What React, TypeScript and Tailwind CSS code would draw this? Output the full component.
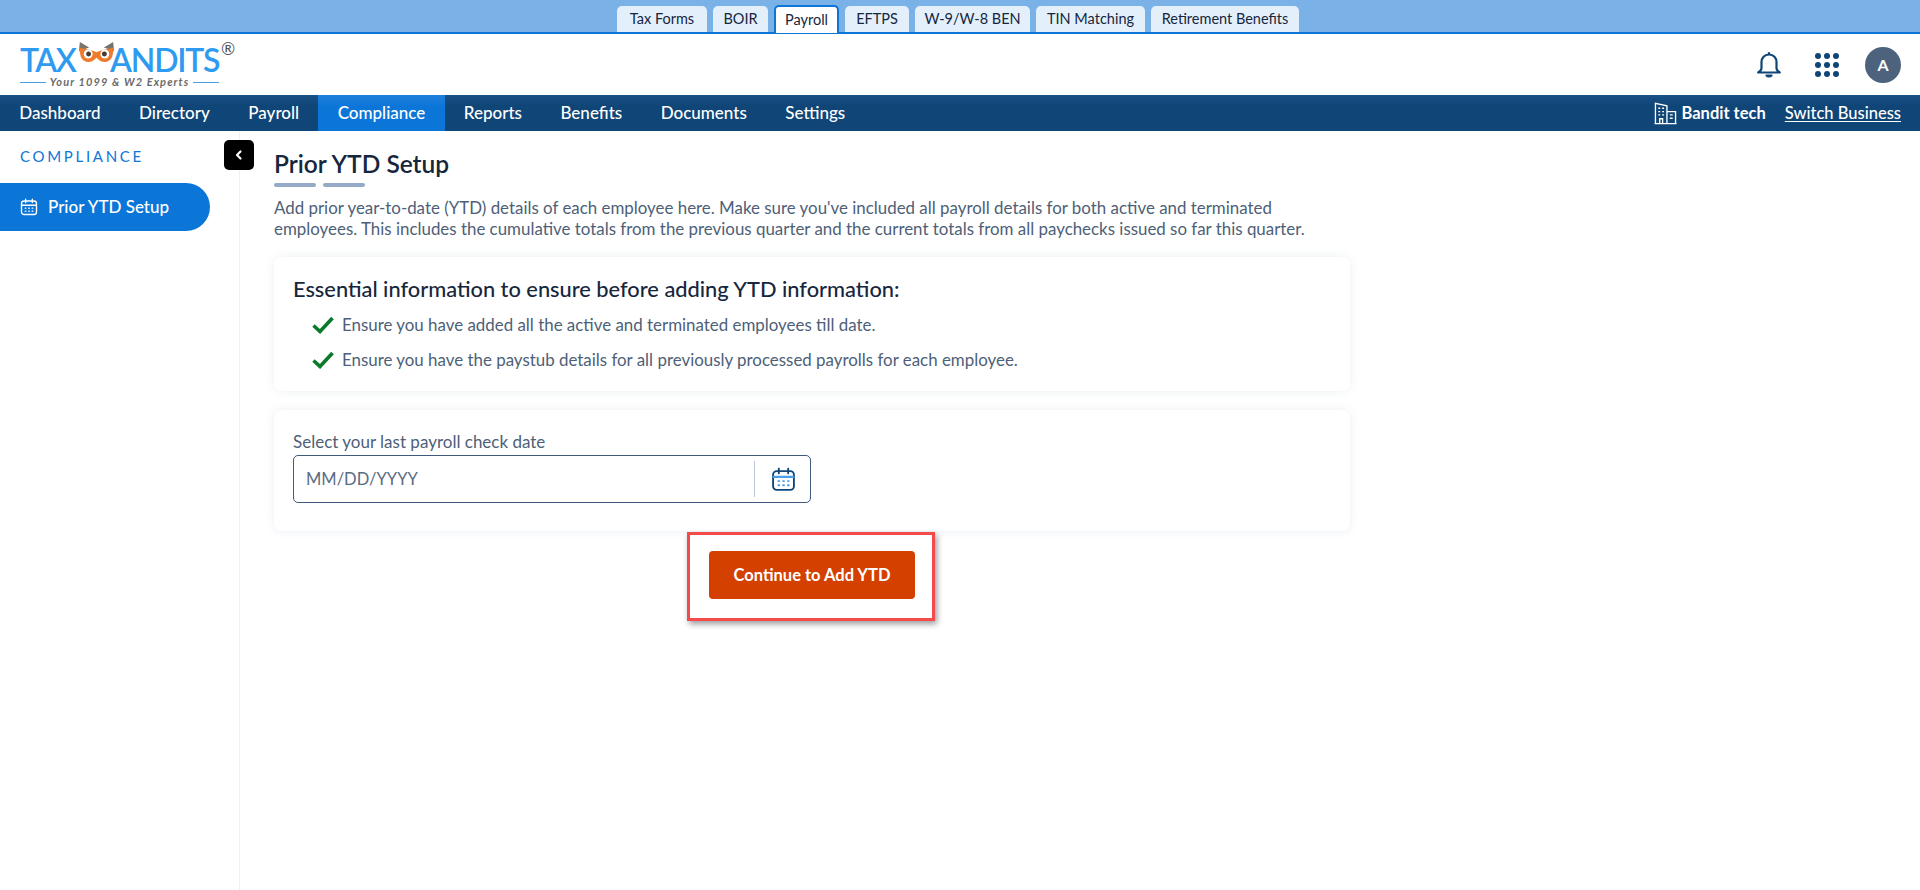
import React from "react";

const font = { fontFamily: '"Lato", "Noto Sans", sans-serif' };

const tabs = [
  { label: "Tax Forms", w: "w-[90px]" },
  { label: "BOIR", w: "w-[55px]" },
  { label: "Payroll", w: "w-[65px]", active: true },
  { label: "EFTPS", w: "w-[64px]" },
  { label: "W-9/W-8 BEN", w: "w-[115px]" },
  { label: "TIN Matching", w: "w-[109px]" },
  { label: "Retirement Benefits", w: "w-[148px]" },
];

const nav = ["Dashboard", "Directory", "Payroll", "Compliance", "Reports", "Benefits", "Documents", "Settings"];

function Calendar({ className, accent }: { className: string; accent: string }) {
  return (
    <svg viewBox="0 0 24 24" className={className} fill="none" stroke="currentColor" strokeWidth="1.8" strokeLinecap="round">
      <rect x="2" y="4" width="20" height="18" rx="3.5" />
      <path d="M7.5 1.5v4.5M16.5 1.5v4.5" />
      <path d="M2.5 9.5h19" stroke={accent} strokeWidth="2" />
      <path d="M7 13.5h.9M11.6 13.5h.9M16.2 13.5h.9M7 17.5h.9M11.6 17.5h.9M16.2 17.5h.9" stroke={accent} />
    </svg>
  );
}

function Logo() {
  return (
    <div className="w-[215px] ml-[20px] mt-[11px] relative shrink-0">
      <div className="flex items-start h-[30px] text-[32px] leading-[30px] font-semibold text-[#2f9bf0]">
        <span className="tracking-[-1.5px] w-[58px]">TAX</span>
        <svg viewBox="0 0 40 28" className="w-[37px] h-[26px] -mt-[4px] shrink-0">
          <path d="M1 11 L2 1 L12 7 Z M39 11 L38 1 L28 7 Z" fill="#77736f" />
          <path d="M1 7 C8 9 13 9 20 12 C27 9 32 9 39 7 L37 17 C33 25 25 24 20 18 C15 24 7 25 3 17 Z" fill="#ee7a2c" />
          <circle cx="11" cy="14" r="4.8" fill="#fff" />
          <circle cx="29" cy="14" r="4.8" fill="#fff" />
          <circle cx="11.5" cy="14" r="2.7" fill="#4a3b32" />
          <circle cx="28.5" cy="14" r="2.7" fill="#4a3b32" />
        </svg>
        <span className="tracking-[-1.2px] -ml-[5px]">ANDITS</span>
      </div>
      <span className="absolute left-[201px] top-[-5px] text-[17px] text-[#555] leading-none">®</span>
      <div className="flex items-center gap-[4px] mt-[1px] w-[199px]">
        <div className="h-px w-[26px] bg-[#4a9fe0]" />
        <span className="text-[11px] italic font-bold text-[#6b6b6b] leading-[12px] tracking-[1.1px] whitespace-nowrap">Your 1099 &amp; W2 Experts</span>
        <div className="h-px w-[26px] bg-[#4a9fe0]" />
      </div>
    </div>
  );
}

function Check({ text }: { text: string }) {
  return (
    <div className="flex items-center h-[35px] pl-[19px]">
      <svg viewBox="0 0 22 18" className="w-[22px] h-[18px] shrink-0 text-[#0a7a2a]" fill="none" stroke="currentColor" strokeWidth="3.6">
        <path d="M1.5 9.5 L8 15.5 L20.5 2" />
      </svg>
      <span className="ml-[8px] text-[16.9px] text-[#4e5f78]">{text}</span>
    </div>
  );
}

export default function App() {
  return (
    <div className="h-[890px] bg-white overflow-hidden flex flex-col relative" style={font}>
      <div className="h-[34px] bg-[#7ab1e6] border-b-2 border-[#0c76d8] flex justify-center items-end shrink-0">
        <div className="flex gap-[6px] h-[26px] translate-x-[-2px]">
          {tabs.map((t) =>
            t.active ? (
              <div key={t.label} className={`${t.w} h-[28px] bg-white border-2 border-b-0 border-[#0c76d8] rounded-t-[5px] -mt-[1px] flex items-center justify-center text-[14.5px] text-[#16263d]`}>
                {t.label}
              </div>
            ) : (
              <div key={t.label} className={`${t.w} bg-[#e3f0fc] rounded-t-[5px] flex items-center justify-center text-[14.5px] text-[#16263d]`}>
                {t.label}
              </div>
            )
          )}
        </div>
      </div>

      <div className="h-[61px] flex items-start justify-between shrink-0">
        <Logo />
        <div className="flex items-center mr-[19px] mt-[13px]">
          <svg viewBox="0 0 24 28" className="w-[24px] h-[28px] text-[#0f4577]" fill="none" stroke="currentColor" strokeWidth="2.2" strokeLinejoin="round">
            <path d="M12 3.5c-4.6 0-7.5 3.4-7.5 7.6v6.2c0 1.6-1.4 3-3.3 4.2h21.6c-1.9-1.2-3.3-2.6-3.3-4.2v-6.2c0-4.2-2.9-7.6-7.5-7.6z" />
            <path d="M12 1.2v2.3" />
            <path d="M9.5 24.5c.8 1.3 4.2 1.3 5 0z" fill="currentColor" />
          </svg>
          <div className="grid grid-cols-3 gap-[3px] ml-[34px]">
            {Array.from({ length: 9 }).map((_, i) => (
              <div key={i} className="w-[6px] h-[6px] rounded-full bg-[#0f4577]" />
            ))}
          </div>
          <div className="ml-[26px] w-[36px] h-[36px] rounded-full bg-[#4c627d] flex items-center justify-center text-white text-[16px] font-bold">A</div>
        </div>
      </div>

      <div className="h-[36px] bg-gradient-to-b from-[#1a5286] to-[#0f4577] from-0% to-30% flex items-center justify-between shrink-0">
        <div className="flex h-full">
          {nav.map((n) => (
            <div key={n} className={`px-[19.25px] flex items-center text-[17px] font-medium text-white ${n === "Compliance" ? "bg-gradient-to-b from-[#1f80dc] to-[#0c76d8] from-0% to-30%" : ""}`}>
              {n}
            </div>
          ))}
        </div>
        <div className="flex items-center pr-[19px] text-white">
          <svg viewBox="0 0 24 24" className="w-[23px] h-[23px]" fill="none" stroke="currentColor" strokeWidth="1.4">
            <path d="M1.5 22.5V1.5l12 2.5v18.5zM13.5 10h9v12.5h-9zM0.5 22.5h23" />
            <path d="M4.5 6.5h2M8.5 6.5h2M4.5 10h2M8.5 10h2M4.5 13.5h2M8.5 13.5h2M16.5 13.5h3M16.5 17h3M6 22v-4.5h3V22" />
          </svg>
          <span className="ml-[5px] text-[16.5px] font-bold">Bandit tech</span>
          <span className="ml-[19px] text-[16.5px] font-medium underline underline-offset-2">Switch Business</span>
        </div>
      </div>

      <div className="flex-1 flex min-h-0">
        <aside className="w-[240px] shrink-0 border-r border-[#eef1f5] relative">
          <div className="pl-[20px] pt-[15px] text-[15px] leading-[20px] tracking-[2.7px] text-[#0c76d8]">COMPLIANCE</div>
          <div className="absolute left-[224px] top-[9px] w-[30px] h-[30px] rounded-[5px] bg-black flex items-center justify-center">
            <svg viewBox="0 0 12 12" className="w-[12px] h-[12px]" fill="none" stroke="white" strokeWidth="2.2" strokeLinecap="round" strokeLinejoin="round">
              <path d="M7.5 2.5 L4 6 L7.5 9.5" />
            </svg>
          </div>
          <div className="mt-[17px] w-[210px] h-[48px] bg-[#0c76d8] rounded-r-full flex items-center pl-[20px] text-white">
            <Calendar className="w-[18px] h-[18px]" accent="currentColor" />
            <span className="ml-[10px] text-[17px] font-medium">Prior YTD Setup</span>
          </div>
        </aside>

        <main className="w-[1076px] ml-[34px]">
          <h1 className="mt-[17px] text-[24.5px] leading-[32px] font-semibold text-[#16263d]">Prior YTD Setup</h1>
          <div className="flex gap-[7px] mt-[3px]">
            <div className="w-[42px] h-[4px] rounded-full bg-[#94aac6]" />
            <div className="w-[42px] h-[4px] rounded-full bg-[#94aac6]" />
          </div>
          <p className="mt-[10px] text-[16.9px] leading-[21px] text-[#4e5f78] w-[1070px]">
            Add prior year-to-date (YTD) details of each employee here. Make sure you've included all payroll details for both active and terminated employees. This includes the cumulative totals from the previous quarter and the current totals from all paychecks issued so far this quarter.
          </p>

          <section className="mt-[18px] h-[134px] rounded-[8px] bg-white shadow-[0_0_10px_rgba(90,120,170,0.12)] pl-[19px] pt-[19px]">
            <h2 className="text-[21.8px] leading-[26px] font-medium text-[#16263d]">Essential information to ensure before adding YTD information:</h2>
            <div className="mt-[5px]">
              <Check text="Ensure you have added all the active and terminated employees till date." />
              <Check text="Ensure you have the paystub details for all previously processed payrolls for each employee." />
            </div>
          </section>

          <section className="mt-[19px] h-[121px] rounded-[8px] bg-white shadow-[0_0_10px_rgba(90,120,170,0.12)] pl-[19px] pt-[22px]">
            <div className="text-[17px] leading-[20px] text-[#4e5f78]">Select your last payroll check date</div>
            <div className="mt-[3px] w-[518px] h-[48px] rounded-[5px] border border-[#3f5a7c] flex items-center">
              <span className="ml-[12px] flex-1 text-[16.5px] text-[#5b6b82]">MM/DD/YYYY</span>
              <div className="w-px h-[36px] bg-[#b9c8d9]" />
              <Calendar className="w-[25px] h-[25px] text-[#0f4577] ml-[16px] mr-[14px]" accent="#4a9fe8" />
            </div>
          </section>

          <div className="flex justify-center mt-[20px]">
            <div className="w-[206px] h-[48px] rounded-[4px] bg-[#d34000] flex items-center justify-center text-white text-[16.5px] font-bold">Continue to Add YTD</div>
          </div>
        </main>
      </div>

      <div className="absolute left-[687px] top-[532px] w-[248px] h-[89px] border-[3px] border-[#f44a4a] shadow-[2px_3px_6px_rgba(0,0,0,0.4)]" />
    </div>
  );
}
